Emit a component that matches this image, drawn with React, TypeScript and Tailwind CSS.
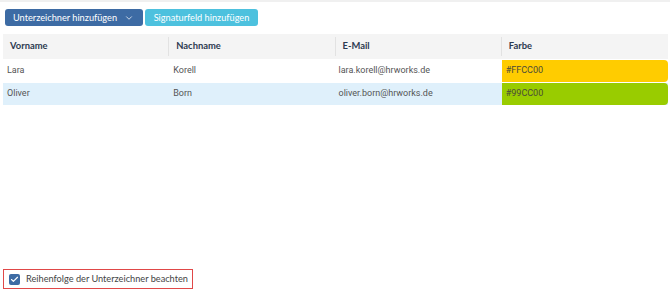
import { ChevronDown, Check } from "lucide-react";

const rows = [
  { first: "Lara", last: "Korell", email: "lara.korell@hrworks.de", color: "#FFCC00", bg: "bg-[#FFCC00]", selected: false },
  { first: "Oliver", last: "Born", email: "oliver.born@hrworks.de", color: "#99CC00", bg: "bg-[#99CC00]", selected: true },
];

const headers = ["Vorname", "Nachname", "E-Mail", "Farbe"];

export default function App() {
  return (
    <div className="w-[670px] h-[290px] bg-white flex flex-col border-t-2 border-[#f0f0f0] font-['Lato',sans-serif]">
      {/* toolbar */}
      <div className="flex gap-[2px] pl-[5px] pt-[7px]">
        <button className="h-[17px] w-[138px] bg-[#3d6ba4] rounded-[3px] text-white text-[9.2px] whitespace-nowrap flex items-center pl-[8px] gap-[7px]">
          Unterzeichner hinzufügen
          <ChevronDown className="w-[10px] h-[10px]" strokeWidth={1.75} />
        </button>
        <button className="h-[17px] w-[113px] bg-[#4dc1de] rounded-[3px] text-white text-[9.2px] whitespace-nowrap flex items-center justify-center">
          Signaturfeld hinzufügen
        </button>
      </div>

      {/* table */}
      <div className="ml-[3px] mr-[2px] mt-[8px]">
        <div className="grid grid-cols-4 h-[25px] bg-[#f4f4f4] items-center">
          {headers.map((h, i) => (
            <div key={h} className={`h-[19px] flex items-center pl-[7px] text-[9.4px] font-bold text-[#2c3a50] ${i < 3 ? "border-r border-[#e2e2e2]" : ""}`}>
              {h}
            </div>
          ))}
        </div>
        {rows.map((r) => (
          <div key={r.first} className={`grid grid-cols-4 h-[22px] mt-[1px] items-center text-[9px] text-[#555] font-['Roboto',sans-serif] ${r.selected ? "bg-[#dff0fb]" : "bg-white"}`}>
            <div className="pl-[4px]">{r.first}</div>
            <div className="pl-[4px]">{r.last}</div>
            <div className="pl-[3px]">{r.email}</div>
            <div className={`h-full flex items-center pl-[4px] rounded-r-[4px] text-[#4a4a3a] ${r.bg}`}>{r.color}</div>
          </div>
        ))}
      </div>

      <div className="flex-1" />

      {/* order checkbox */}
      <div className="ml-[3px] mb-[1px] w-[190px] h-[20px] border border-[#e04848] flex items-center pl-[5px] gap-[6px]">
        <span className="w-[11px] h-[11px] shrink-0 rounded-[2px] bg-[#3d6ba4] flex items-center justify-center">
          <Check className="w-[9px] h-[9px] text-white" strokeWidth={3} />
        </span>
        <span className="text-[9.2px] whitespace-nowrap text-[#444]">Reihenfolge der Unterzeichner beachten</span>
      </div>
    </div>
  );
}
